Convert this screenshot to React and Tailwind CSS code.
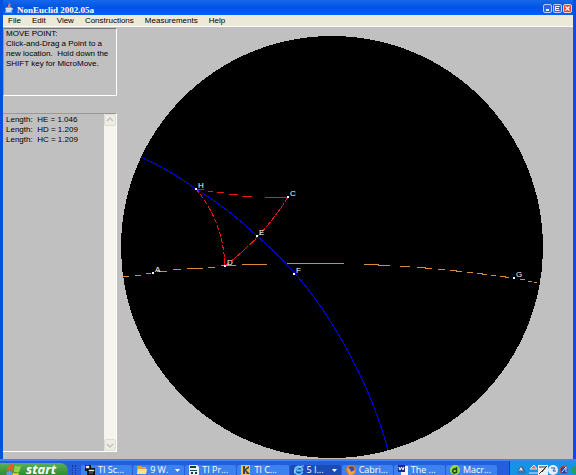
import React from 'react';

const menus = ['File', 'Edit', 'View', 'Constructions', 'Measurements', 'Help'];

const lengths = [
  { name: 'HE', value: '1.046' },
  { name: 'HD', value: '1.209' },
  { name: 'HC', value: '1.209' },
];

const points = [
  { label: 'H', x: 196, y: 189 },
  { label: 'C', x: 288, y: 197 },
  { label: 'E', x: 257, y: 236 },
  { label: 'D', x: 225, y: 266 },
  { label: 'F', x: 294, y: 274 },
  { label: 'A', x: 153, y: 273 },
  { label: 'G', x: 514, y: 278 },
];

function JavaCup({ className }) {
  return (
    <svg viewBox="0 0 10 12" className={className} fill="none" aria-hidden="true">
      <path d="M5 0c2 2-2 3 0 5M7 2c-2 1-1 2-1 3" stroke="#f27a61" strokeWidth="1.5" />
      <path d="M1 6h7l-1 4H2z" fill="#c9d8f5" />
      <path d="M1 6h7l-1 4H2zM8 6c2 0 2 3-1 3M0 11h9" stroke="#e8eefc" strokeWidth="1.2" />
    </svg>
  );
}

function WindowsFlag() {
  return (
    <svg viewBox="0 0 16 16" className="h-4 w-4 shrink-0" aria-hidden="true">
      <path d="M3 2q3-2 5 0L6.500 8q-3-2-5.500 0z" fill="#ef5a2c" />
      <path d="M9 2.500q3 2 6 0l-1.500 6q-3 2-6 0z" fill="#8fd14a" />
      <path d="M.8 9q3-2 5.500 0L5 14.500q-3-2-5 0z" fill="#5c9bf5" />
      <path d="M7 9.500q3 2 6 0l-1.500 5.500q-3 2-6 0z" fill="#fbd03a" />
    </svg>
  );
}

function TaskIcon({ kind }) {
  return (
    <svg viewBox="0 0 10 10" className="h-2.5 w-2.5 shrink-0" aria-hidden="true">
      {kind === 'device' && (
        <>
          <path d="M0 0h6v3h4v7H2V6H0z" fill="#111" />
          <path d="M1 1h3v2H1zM4 5h5v1H4zM4 8h4" fill="#e8e8e8" stroke="#e8e8e8" strokeWidth=".5" />
        </>
      )}
      {kind === 'folder' && (
        <>
          <path d="M0 1h4l1 1h4v7H0z" fill="#d9a928" />
          <path d="M1 4h9L9 9H0z" fill="#fbe38a" />
        </>
      )}
      {kind === 'calc' && (
        <>
          <path d="M0 0h8l2 2v8H0z" fill="#e6f3ec" />
          <path d="M1 1h6v2H1zM1 5h7v1H1zM2 7h2v2H2zM6 7h2v2H6z" fill="#173f38" />
        </>
      )}
      {kind === 'connect' && (
        <>
          <path d="M0 0h9v10H0z" fill="#f0c340" />
          <path d="M2 1h2v3l4-3v2L5 5l4 4H6L4 6v3H2z" fill="#32405a" />
        </>
      )}
      {kind === 'explorer' && (
        <>
          <path d="M8.500 7A4 4 0 1 1 8.500 4L8 5.500H2.500" fill="none" stroke="#5fc2ff" strokeWidth="1.800" />
          <path d="M0 9Q-1 6 4 3T10 1" fill="none" stroke="#bfe5ff" strokeWidth=".8" />
        </>
      )}
      {kind === 'firefox' && (
        <>
          <circle cx="5" cy="5" r="5" fill="#ec7b22" />
          <circle cx="5.500" cy="4" r="2.800" fill="#344fae" />
          <path d="M1 3l3 1 1 3 4-2-1 4-5 1z" fill="#f6a540" />
        </>
      )}
      {kind === 'word' && (
        <>
          <path d="M3 1h7v9H3z" fill="#f5f5ff" />
          <path d="M0 0h7v7H0z" fill="#182f86" />
          <path d="M1 2l1 3 1.500-3L5 5l1-3" fill="none" stroke="#fff" />
        </>
      )}
      {kind === 'dreamweaver' && (
        <>
          <circle cx="5" cy="5" r="5" fill="#9adb3c" />
          <path d="M6.500 2v6M6 4.500a2 2 0 1 0 0 3" fill="none" stroke="#174a18" strokeWidth="1.500" />
        </>
      )}
    </svg>
  );
}

const tasks = [
  { kind: 'device', text: 'TI Sc...' },
  { kind: 'folder', text: '9 W.', menu: true },
  { kind: 'calc', text: 'TI Pr...' },
  { kind: 'connect', text: 'TI C...' },
  { kind: 'explorer', text: '5 I...', menu: true, active: true },
  { kind: 'firefox', text: 'Cabri...' },
  { kind: 'word', text: 'The ...' },
  { kind: 'dreamweaver', text: 'Macr...' },
];

function TitleBar() {
  return (
    <header className="flex h-[15px] shrink-0 items-center bg-linear-to-b from-[#1668ea] via-[#0054e3] to-[#0060f8] pr-px pl-0.5">
      <JavaCup className="mr-1 h-3 w-2" />
      <h1 className="grow pt-1 font-['Liberation_Serif',serif] text-[9px] leading-[10px] font-bold text-white">NonEuclid 2002.05a</h1>
      <div className="flex gap-px pt-0.5">
        <button aria-label="Minimize" className="flex h-[9px] w-[9px] items-center justify-center rounded-xs border border-[#b9ceff] bg-[#2f63df]">
          <svg viewBox="0 0 7 7" className="h-[7px] w-[7px]"><path d="M2 5h3" stroke="#fff" strokeWidth="2" /></svg>
        </button>
        <button aria-label="Restore" className="flex h-[9px] w-[9px] items-center justify-center rounded-xs border border-[#b9ceff] bg-[#2f63df]">
          <svg viewBox="0 0 7 7" className="h-[7px] w-[7px]"><path d="M5.500 1.500h-4v4h4M2 3.500h3" fill="none" stroke="#fff" /></svg>
        </button>
        <button aria-label="Close" className="flex h-[9px] w-[9px] items-center justify-center rounded-xs border border-[#f3d0c6] bg-[#dc4f2b]">
          <svg viewBox="0 0 7 7" className="h-[7px] w-[7px]"><path d="M1.500 1.500l4 4M5.500 1.500l-4 4" stroke="#fff" strokeWidth="1.200" /></svg>
        </button>
      </div>
    </header>
  );
}

// Instructions on top, list of measurements underneath
function SidePanels() {
  return (
    <aside className="flex w-[114px] shrink-0 flex-col gap-[17px] pt-px">
      <p className="h-[68px] shrink-0 border-t border-r border-b border-l border-t-[#777] border-r-white border-b-white border-l-[#999] pl-0.5 text-[8px] leading-[10px] whitespace-nowrap">
        MOVE POINT:<br />
        Click-and-Drag a Point to a<br />
        new location.&nbsp; Hold down the<br />
        SHIFT key for MicroMove.
      </p>
      <div className="flex min-h-0 grow border-t border-r border-b border-t-[#999] border-r-white border-b-white">
        <ul className="grow pt-px pl-[3px] text-[8px] leading-[10px]">
          {lengths.map((item) => (
            <li key={item.name} className="whitespace-pre">Length:  {item.name} = {item.value}</li>
          ))}
        </ul>
        <div className="flex w-3 flex-col justify-between bg-[#f5f4ee]">
          <button aria-label="Scroll up" className="flex h-3 items-center justify-center rounded-xs border border-[#dddcd3] bg-[#eeede5]">
            <svg viewBox="0 0 8 8" className="h-2 w-2"><path d="M1 5l3-3 3 3" fill="none" stroke="#c3c2ba" strokeWidth="1.500" /></svg>
          </button>
          <button aria-label="Scroll down" className="flex h-3 items-center justify-center rounded-xs border border-[#dddcd3] bg-[#eeede5]">
            <svg viewBox="0 0 8 8" className="h-2 w-2"><path d="M1 3l3 3 3-3" fill="none" stroke="#c3c2ba" strokeWidth="1.500" /></svg>
          </button>
        </div>
      </div>
    </aside>
  );
}

// Hyperbolic plane drawn in the Poincaré disk
function Disk() {
  return (
    <svg viewBox="117 27 456 432" className="h-full min-w-0 grow" role="img" aria-label="Hyperbolic plane" shapeRendering="crispEdges">
      <circle cx="332" cy="247" r="211" fill="#000" />
      <g fill="none">
        <path d="M141 157Q168 169 196 189Q229 209 257 236Q303 275 334 327Q371 387 388 450" stroke="#0000e0" />
        <path d="M123 277L129 276M135 275L141 275M146 274L151 273M157 272L167 271M173 270L181 269M187 269L203 268M208 267L215 267M221 266L236 265M242 265L267 264M287 263.500L344 263.500M364 264L378 264L378 265L390 265M400 266L410 266M417 267L425 267L425 268L432 268M438 269L445 269M450 270L456 270L456 271L462 271M467 272L473 272M477 273L482 273L482 274L487 274M491 275L496 275M500 276L505 276L505 277L509 277M520 279L525 280M528 281L532 281M534 282L537 282" stroke="#d88b3c" />
        <path d="M196 189L204 190M208 191L213 192M217 192L224 193M229 194L238 195M242 196L252 196M265 197L286 197" stroke="#e81818" />
        <path d="M196 189Q223 221 225 266" stroke="#e81818" strokeDasharray="5 2" />
        <path d="M225 266Q264 236 288 197" stroke="#e81818" strokeDasharray="7 1" />
        <path d="M224.500 258v8" stroke="#f01010" />
      </g>
      {points.map((p) => (
        <g key={p.label} fill="#fff" className="font-['Liberation_Sans',sans-serif] text-[8px]">
          <circle cx={p.x} cy={p.y} r="1" fill="#000" stroke="#fff" />
          <text x={p.x + 2} y={p.y - 1}>{p.label}</text>
        </g>
      ))}
    </svg>
  );
}

function Tray() {
  return (
    <svg viewBox="0 0 62 12" className="h-3 w-[62px]" aria-hidden="true">
      <path d="M4 8l3-5 3 5zM3 10h9M8 3l3 6" fill="#d7dceb" stroke="#455f91" />
      <path d="M16 6l4-4 3 4zM15 10h10" fill="#ef6c54" stroke="#d9e5f5" />
      <path d="M24 2h10v10h-10z" fill="#e9eff5" />
      <path d="M25 4h7l-4 5M25 11l8-8" fill="none" stroke="#263340" />
      <circle cx="39" cy="7" r="5" fill="#e9edff" />
      <path d="M37 5h4l-2 3h3" fill="none" stroke="#3453b0" />
      <circle cx="50" cy="7" r="4" fill="#1747ad" stroke="#d54643" />
      <path d="M48 9l4-5v5" fill="none" stroke="#dce8ff" />
      <circle cx="61" cy="7" r="4" fill="#289c65" />
    </svg>
  );
}

function Taskbar() {
  return (
    <footer className="flex h-4 shrink-0 overflow-hidden border-t-2 border-[#3e87ee] bg-[#245edb] font-['Open_Sans',sans-serif] text-white">
      <button className="mt-0.5 flex h-3 w-[68px] shrink-0 items-start gap-1 rounded-tr-lg bg-linear-to-b from-[#5ab257] to-[#2f8a2e] pl-1.5">
        <WindowsFlag />
        <span className="text-[13px] leading-3 font-bold italic">start</span>
      </button>
      <div className="mx-1 mt-1 w-1 shrink-0 border-r border-l border-dotted border-[#163a91]" />
      <nav className="ml-px flex min-w-0 grow gap-px pt-1" aria-label="Open windows">
        {tasks.map((task) => (
          <button
            key={task.kind}
            className={
              task.active
                ? 'flex min-w-0 flex-1 items-start gap-[3px] rounded-t-xs bg-[#1b4cb5] px-1'
                : 'flex min-w-0 flex-1 items-start gap-[3px] rounded-t-xs bg-[#3c81f0] px-1'
            }
          >
            <TaskIcon kind={task.kind} />
            <span className="grow text-left text-[9px] leading-[10px] whitespace-nowrap">{task.text}</span>
            {task.menu && <svg viewBox="0 0 5 3" className="mt-1 h-[3px] w-[5px] shrink-0"><path d="M0 0h5L2.500 3z" fill="#fff" /></svg>}
          </button>
        ))}
      </nav>
      <div className="ml-3 flex shrink-0 items-start border-l border-[#123f8e] bg-[#1594e7] pt-0.5 pl-1">
        <Tray />
      </div>
    </footer>
  );
}

export default function App() {
  return (
    <div className="flex h-screen flex-col overflow-hidden bg-[#c0c0c0] font-['Liberation_Sans',sans-serif] text-black">
      <main className="flex min-h-0 grow flex-col border-x-3 border-[#0650e0]">
        <TitleBar />
        <nav className="flex h-3 shrink-0 items-center gap-[11px] border-b border-white bg-[#ece9d8] pl-[5px] text-[8px] leading-[10px]">
          {menus.map((menu) => (
            <button key={menu}>{menu}</button>
          ))}
        </nav>
        <div className="flex min-h-0 grow">
          <div className="flex pb-[7px]">
            <SidePanels />
          </div>
          <Disk />
        </div>
      </main>
      <Taskbar />
    </div>
  );
}
